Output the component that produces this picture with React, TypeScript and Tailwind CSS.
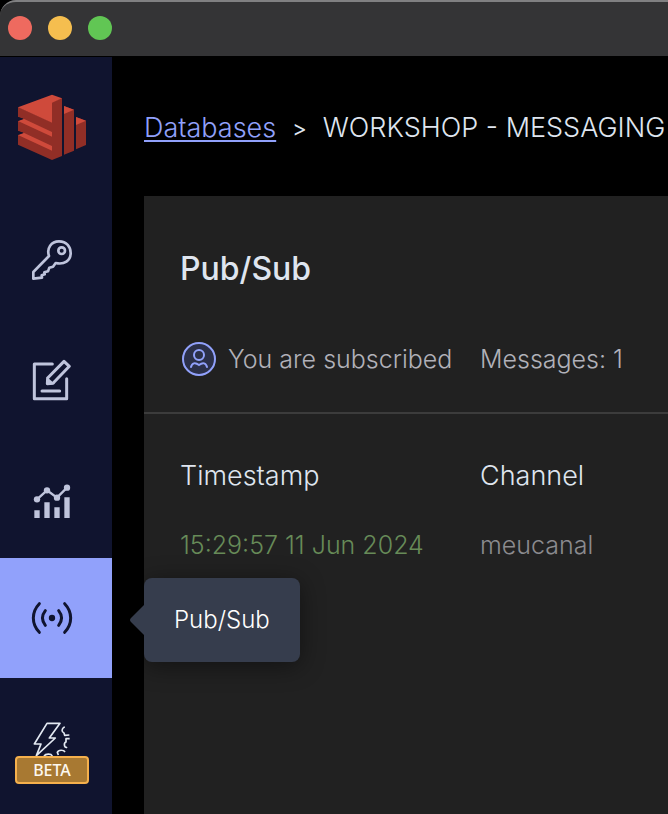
import type { ReactNode } from 'react';

function NavItem({ label, active, children }: { label: string; active?: boolean; children: ReactNode }) {
  return (
    <button
      type="button"
      aria-label={label}
      className={
        active
          ? 'flex h-[120px] w-full items-center justify-center bg-[#91a1fb] pr-2 text-[#10142f]'
          : 'flex h-[120px] w-full items-center justify-center pr-2 text-[#bfc4dc]'
      }
    >
      {children}
    </button>
  );
}

function Logo() {
  return (
    <svg width="72" height="68" viewBox="48 44 216 204" aria-hidden="true">
      <path fill="#912e26" d="M54 83 156 129 156 68 186 56V230L156 242 54 196V165L70 160 54 155V124L70 118 54 113Z" />
      <path fill="#cf4a3b" d="M54 84 156 46 186 57 156 70V130Z" />
      <path fill="#cf4a3b" d="M54 125 71 118 156 158V172Z M54 167 71 160 156 200V214Z" />
      <path fill="#10142f" d="M54 113 71 119 54 125Z M54 155 71 161 54 167Z" />
      <path fill="#912e26" d="M192 80 222 91V214L192 226Z M228 113 258 124V197L228 210Z" />
      <path fill="#cf4a3b" d="M192 80 222 91 192 104Z M228 113 258 124 228 137Z" />
    </svg>
  );
}

function KeyIcon() {
  return (
    <svg width="64" height="60" viewBox="0 -6 192 180" fill="none" stroke="currentColor" strokeWidth="8" strokeLinejoin="round" aria-hidden="true">
      <path d="M87 78C79 54 94 34 117 34C140 34 152 51 152 69C152 92 133 105 107 99L99 110 88 113 84 124 73 127 74 133 65 136 66 143 40 146V126Z" />
      <circle cx="125" cy="62" r="10" />
    </svg>
  );
}

function EditIcon() {
  return (
    <svg width="64" height="60" viewBox="0 -6 192 180" fill="none" stroke="currentColor" strokeWidth="9" strokeLinecap="round" strokeLinejoin="round" aria-hidden="true">
      <path d="M97 42H43V146H140V86M66 123H119" />
      <path d="M83 84 132 34 148 49 99 100 82 101Z" />
      <path fill="currentColor" stroke="none" d="M80 80 105 102 80 105Z" />
    </svg>
  );
}

function ChartIcon() {
  return (
    <svg width="64" height="60" viewBox="0 -21 192 180" fill="currentColor" aria-hidden="true">
      <path d="M43 106H59V129H43ZM73 82H89V129H73ZM103 97H119V129H103ZM133 67H149V129H133Z" />
      <path d="M51 73 81 46 111 68 141 38" fill="none" stroke="currentColor" strokeWidth="7" />
      <circle cx="51" cy="73" r="9.5" />
      <circle cx="81" cy="46" r="9.5" />
      <circle cx="111" cy="68" r="9.5" />
      <circle cx="141" cy="38" r="9.5" />
    </svg>
  );
}

function BroadcastIcon() {
  return (
    <svg width="64" height="60" viewBox="0 -6 192 180" fill="none" stroke="currentColor" strokeWidth="9" strokeLinecap="round" aria-hidden="true">
      <path d="M58 41C34 66 34 102 58 127M134 41C158 66 158 102 134 127M76 62C65 76 65 92 76 106M116 62C127 76 127 92 116 106" />
      <circle cx="96" cy="84" r="9.5" fill="currentColor" stroke="none" />
    </svg>
  );
}

function BoltGearIcon() {
  return (
    <svg width="64" height="60" viewBox="60 -6 192 180" fill="none" stroke="#e3e9f2" strokeWidth="5" strokeLinejoin="round" aria-hidden="true">
      <path d="M141 40H180L148 84H166L109 137 123 102H103Z" />
      <path d="M194 50C183 56 185 67 192 69L194 76 208 75M209 86H198V96C190 99 193 112 199 112L201 114M195 126C191 119 175 119 172 127L175 135M132 138C137 131 153 130 157 138" />
    </svg>
  );
}

function UserIcon() {
  return (
    <svg width="34" height="34" viewBox="0 0 34 34" fill="none" stroke="#91a1fb" strokeWidth="2" strokeLinecap="round" aria-hidden="true">
      <circle cx="17" cy="17" r="16" fill="#2b3049" />
      <circle cx="17" cy="13" r="5" />
      <path d="M9 25C10 21 13 20 17 23C21 20 24 21 25 25" />
    </svg>
  );
}

export default function App() {
  return (
    <div className="flex min-h-screen flex-col overflow-hidden bg-black font-['Inter',sans-serif] text-[25px] leading-8 font-light text-[#dfe5ef]">
      <header className="flex h-14 shrink-0 items-center gap-4 rounded-tl-2xl border-t-2 border-[#808082] bg-[#343436] pb-0.5 pl-2">
        <button type="button" aria-label="Close" className="size-6 rounded-full bg-[#ee6a5f]" />
        <button type="button" aria-label="Minimize" className="size-6 rounded-full bg-[#f5be4f]" />
        <button type="button" aria-label="Zoom" className="size-6 rounded-full bg-[#61c654]" />
      </header>
      <div className="flex grow pt-px">
        <nav aria-label="Main" className="w-28 shrink-0 bg-[#10142f]">
          <div className="flex h-[141px] items-center justify-center pr-2">
            <Logo />
          </div>
          <NavItem label="Browser"><KeyIcon /></NavItem>
          <NavItem label="Workbench"><EditIcon /></NavItem>
          <NavItem label="Analysis"><ChartIcon /></NavItem>
          <div className="relative">
            <NavItem label="Pub/Sub" active><BroadcastIcon /></NavItem>
            <div role="tooltip" className="absolute top-5 left-36 z-10 flex h-[84px] items-center rounded-lg bg-[#363d4d] px-[30px] text-2xl whitespace-nowrap text-white shadow-[0_4px_24px_rgba(0,0,0,0.45)]">
              <svg width="14" height="30" viewBox="0 0 14 30" className="absolute top-[27px] right-full" aria-hidden="true">
                <path fill="#363d4d" d="M14 0V30L1 17Q-1 15 1 13Z" />
              </svg>
              Pub/Sub
            </div>
          </div>
          <div className="relative">
            <NavItem label="Triggers and functions"><BoltGearIcon /></NavItem>
            <span className="absolute top-[78px] left-[15px] flex h-7 w-[74px] items-center justify-center rounded border-2 border-[#f5b04c] bg-[#a87932] font-['Noto_Sans',sans-serif] text-base font-medium text-[#fcf8f0]">
              BETA
            </span>
          </div>
        </nav>
        <main className="flex min-w-0 grow flex-col pl-8">
          <div className="flex h-[139px] items-center gap-4 pt-0.5 text-[27px] whitespace-nowrap">
            <a href="#databases" className="text-[#91a1fb] underline decoration-2 underline-offset-3">Databases</a>
            <span className="text-[22px] font-normal">&gt;</span>
            <span>WORKSHOP - MESSAGING</span>
          </div>
          <section className="grow bg-[#212121]">
            <div className="border-b-2 border-[#3c3c3c] px-9 pt-[53px] pb-9">
              <h1 className="text-[32px] leading-10 font-medium">Pub/Sub</h1>
              <div className="mt-[53px] flex items-center text-[#b1b1b9]">
                <div className="flex w-[300px] shrink-0 items-center gap-3 pl-0.5 whitespace-nowrap">
                  <UserIcon />
                  You are subscribed
                </div>
                <span className="whitespace-nowrap">Messages: 1</span>
              </div>
            </div>
            <table className="mt-7 ml-9 w-full table-fixed text-left">
              <thead className="text-[27px]">
                <tr className="h-[68px]">
                  <th className="w-[300px] font-light">Timestamp</th>
                  <th className="font-light">Channel</th>
                </tr>
              </thead>
              <tbody>
                <tr className="h-[70px]">
                  <td className="text-[#678b58]">15:29:57 11 Jun 2024</td>
                  <td className="text-[#8b8b8f]">meucanal</td>
                </tr>
              </tbody>
            </table>
          </section>
        </main>
      </div>
    </div>
  );
}
